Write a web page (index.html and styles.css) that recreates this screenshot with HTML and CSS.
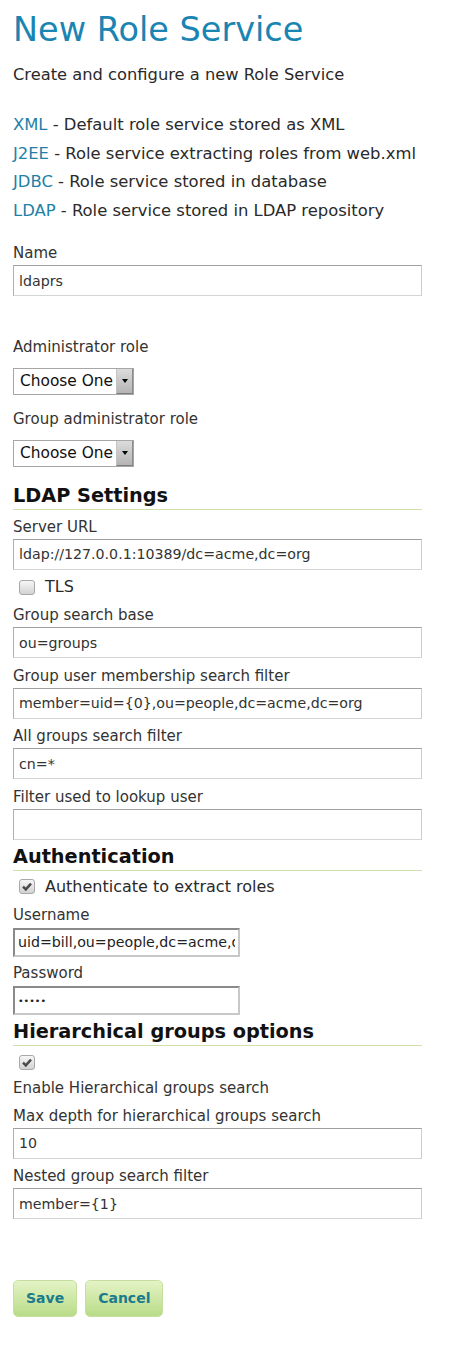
FILE: index.html
```html
<!DOCTYPE html>
<html lang="en">
<head>
<meta charset="utf-8">
<title>New Role Service</title>
<link rel="stylesheet" href="styles.css">
</head>
<body>
<div class="page">
  <h1 class="title">New Role Service</h1>
  <p class="desc">Create and configure a new Role Service</p>
  <ul class="types">
    <li><a href="#">XML</a> - Default role service stored as XML</li>
    <li><a href="#">J2EE</a> - Role service extracting roles from web.xml</li>
    <li><a href="#">JDBC</a> - Role service stored in database</li>
    <li><a href="#">LDAP</a> - Role service stored in LDAP repository</li>
  </ul>

  <form class="form">
    <div class="field">
      <label class="lbl">Name</label>
      <input class="txt" type="text" value="ldaprs">
    </div>

    <div class="field field-select select-admin">
      <label class="lbl">Administrator role</label>
      <span class="select"><span class="select-text">Choose One</span><span class="select-btn"><span class="tri"></span></span></span>
    </div>
    <div class="field field-select select-group">
      <label class="lbl">Group administrator role</label>
      <span class="select"><span class="select-text">Choose One</span><span class="select-btn"><span class="tri"></span></span></span>
    </div>

    <h2 class="section section-ldap">LDAP Settings</h2>
    <div class="field">
      <label class="lbl">Server URL</label>
      <input class="txt" type="text" value="ldap://127.0.0.1:10389/dc=acme,dc=org">
    </div>
    <div class="check-row check-tls">
      <span class="cb"></span><span class="cb-label">TLS</span>
    </div>
    <div class="field">
      <label class="lbl">Group search base</label>
      <input class="txt" type="text" value="ou=groups">
    </div>
    <div class="field">
      <label class="lbl">Group user membership search filter</label>
      <input class="txt" type="text" value="member=uid={0},ou=people,dc=acme,dc=org">
    </div>
    <div class="field">
      <label class="lbl">All groups search filter</label>
      <input class="txt" type="text" value="cn=*">
    </div>
    <div class="field field-last">
      <label class="lbl">Filter used to lookup user</label>
      <input class="txt" type="text" value="">
    </div>

    <h2 class="section section-auth">Authentication</h2>
    <div class="check-row check-auth">
      <span class="cb"><svg viewBox="0 0 16 15" width="16" height="15"><path d="M4 7.6 L6.8 10.4 L12 4.6" fill="none" stroke="#4a4a4a" stroke-width="2.4"/></svg></span><span class="cb-label">Authenticate to extract roles</span>
    </div>
    <div class="field field-small">
      <label class="lbl">Username</label>
      <input class="txt txt-small" type="text" value="uid=bill,ou=people,dc=acme,dc=org">
    </div>
    <div class="field field-small">
      <label class="lbl">Password</label>
      <input class="txt txt-small txt-pass" type="password" value="bills">
    </div>

    <h2 class="section section-hier">Hierarchical groups options</h2>
    <div class="check-row check-hier">
      <span class="cb"><svg viewBox="0 0 16 15" width="16" height="15"><path d="M4 7.6 L6.8 10.4 L12 4.6" fill="none" stroke="#4a4a4a" stroke-width="2.4"/></svg></span>
    </div>
    <div class="plain">Enable Hierarchical groups search</div>
    <div class="field">
      <label class="lbl">Max depth for hierarchical groups search</label>
      <input class="txt" type="text" value="10">
    </div>
    <div class="field">
      <label class="lbl">Nested group search filter</label>
      <input class="txt" type="text" value="member={1}">
    </div>

    <div class="buttons">
      <button type="button" class="btn">Save</button>
      <button type="button" class="btn">Cancel</button>
    </div>
  </form>
</div>
</body>
</html>
```

FILE: styles.css
```css
html, body {
  margin: 0;
  padding: 0;
  background: #ffffff;
}

body {
  font-family: "DejaVu Sans", Verdana, sans-serif;
  color: #333333;
  font-size: 14px;
}

.page {
  padding: 0 13px;
  width: 409px;
}

.title {
  margin: 9px 0 0 0;
  font-size: 33.5px;
  line-height: 42px;
  font-weight: normal;
  color: #1a85b2;
}

.desc {
  margin: 12px 0 0 0;
  font-size: 16.3px;
  line-height: 24px;
  color: #2a2a2a;
}

.types {
  list-style: none;
  margin: 24px 0 0 0;
  padding: 0;
  font-size: 16.4px;
  line-height: 28.5px;
  color: #2a2a2a;
}

.types a {
  color: #1f7fa6;
  text-decoration: none;
}

.form {
  display: flex;
  flex-direction: column;
  align-items: flex-start;
  margin: 18px 0 0 0;
}

.field {
  display: flex;
  flex-direction: column;
  align-items: flex-start;
  margin-bottom: 7.5px;
}

.lbl {
  display: block;
  font-size: 15px;
  line-height: 20px;
  margin-bottom: 2px;
  color: #333;
}

.txt {
  box-sizing: border-box;
  width: 409px;
  height: 31px;
  margin: 0;
  padding: 0 5px;
  border: 1px solid;
  border-color: #a0a0a0 #cccccc #d4d4d4 #b0b0b0;
  font-family: "DejaVu Sans", Verdana, sans-serif;
  font-size: 14.2px;
  color: #333;
  background: #fff;
  outline: none;
}

.field-last {
  margin-bottom: 0;
}

.field-small {
  margin-bottom: 6px;
}

.field-small .lbl {
  margin-bottom: 3px;
}

.txt-small {
  width: 227px;
  height: 29px;
  border: 2px solid;
  border-color: #8a8a8a #c8c8c8 #c8c8c8 #8a8a8a;
  padding: 0 3px;
  color: #222;
}

.txt-pass {
  font-size: 9.5px;
  letter-spacing: 0;
}

.field-select {
  margin-bottom: 0;
}

.field-select .lbl {
  margin-bottom: 11px;
}

.select-admin {
  margin-top: 33px;
}

.select-group {
  margin-top: 14px;
}

.select {
  box-sizing: border-box;
  display: flex;
  width: 121px;
  height: 27px;
  border: 1px solid #a6a6a6;
  background: #fff;
}

.select-text {
  flex: 1;
  padding-left: 6px;
  font-size: 15.4px;
  line-height: 25px;
  color: #111;
}

.select-btn {
  width: 15px;
  display: flex;
  align-items: center;
  justify-content: center;
  background: linear-gradient(#dcdcdc, #b4b4b4);
  border-left: 1px solid #c4c4c4;
  border-right: 1px solid #8a8a8a;
  border-bottom: 1px solid #7e7e7e;
}

.tri {
  width: 0;
  height: 0;
  border-left: 3px solid transparent;
  border-right: 3px solid transparent;
  border-top: 4px solid #000;
}

.section {
  align-self: stretch;
  margin: 0;
  font-size: 19.3px;
  font-weight: bold;
  line-height: 22px;
  color: #111;
  padding-bottom: 2px;
  border-bottom: 1px solid #cfe0ad;
}

.section-ldap {
  margin-top: 18px;
  margin-bottom: 7px;
}

.section-auth {
  margin-top: 6px;
}

.section-hier {
  margin-top: 0;
}

.check-row {
  display: flex;
  align-items: center;
  gap: 10px;
  padding-left: 6px;
  height: 20px;
}

.check-tls {
  margin: 0 0 8px 0;
}

.check-auth {
  margin: 6px 0 8px 0;
}

.check-hier {
  margin: 7px 0 5px 0;
}

.cb {
  box-sizing: border-box;
  width: 16px;
  height: 15px;
  border: 1px solid #a8a8a8;
  border-radius: 3px;
  background: linear-gradient(#f6f6f6, #d2d2d2);
  display: inline-flex;
  align-items: center;
  justify-content: center;
  overflow: hidden;
}

.cb svg {
  display: block;
  flex: none;
}

.cb-label {
  font-size: 16px;
  line-height: 20px;
  color: #2a2a2a;
}

.plain {
  font-size: 15px;
  line-height: 20px;
  margin-bottom: 8px;
  color: #333;
}

.buttons {
  display: flex;
  gap: 8px;
  margin-top: 53px;
}

.btn {
  height: 37px;
  padding: 0 12px;
  border: 1px solid #c6df9e;
  border-radius: 5px;
  background: linear-gradient(#e4f3c6, #b9dc87);
  font-family: "DejaVu Sans", Verdana, sans-serif;
  font-size: 14px;
  font-weight: bold;
  color: #1c7a8d;
  cursor: pointer;
}
```
